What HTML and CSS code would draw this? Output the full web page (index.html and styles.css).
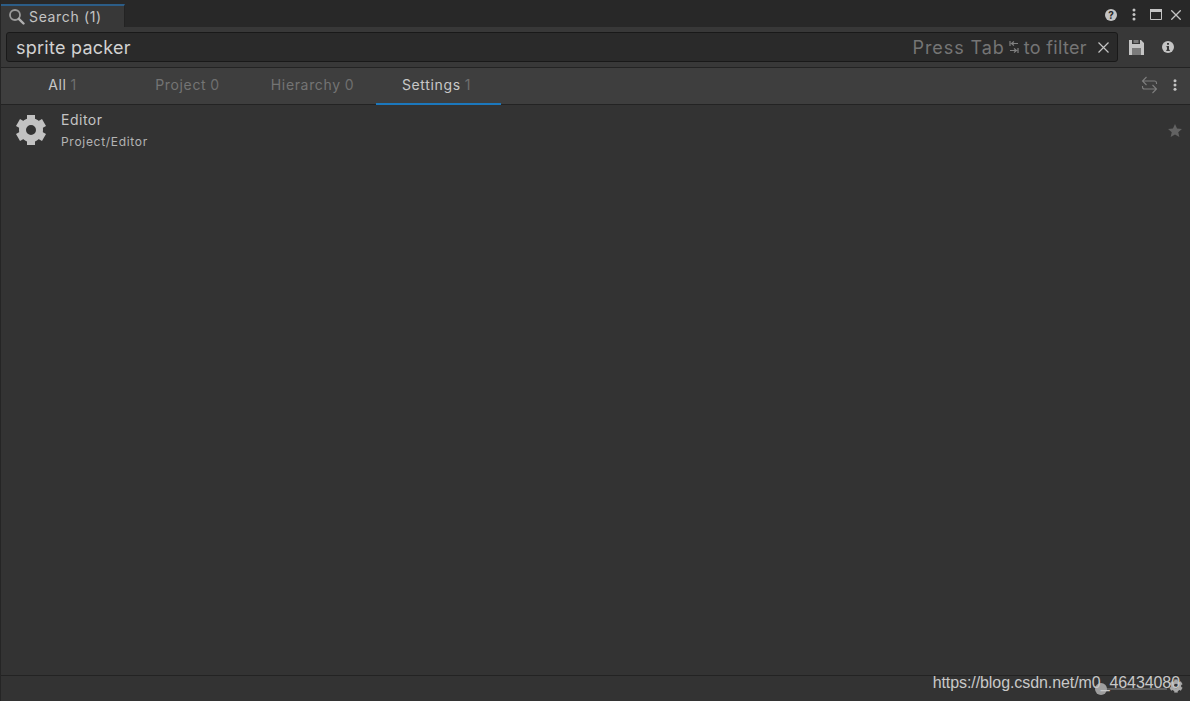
FILE: index.html
```html
<!DOCTYPE html>
<html lang="en">
<head>
<meta charset="utf-8">
<title>Search</title>
<link rel="stylesheet" href="styles.css">
</head>
<body>
<div class="window">
  <header class="titlebar">
    <div class="wintab">
      <svg class="tabicon" width="17" height="17" viewBox="0 0 17 17"><circle cx="7" cy="7" r="5" fill="none" stroke="#9a9a9a" stroke-width="1.8"/><path d="M10.8 10.8 L15.5 15.5" stroke="#b0b0b0" stroke-width="2.4" stroke-linecap="round"/></svg>
      <span>Search (1)</span>
    </div>
    <div class="winbtns">
      <svg width="12" height="12" viewBox="0 0 12 12"><circle cx="6" cy="6" r="6" fill="#c4c4c4"/><text class="qmark" x="6" y="9.500">?</text></svg>
      <svg class="dots" width="4" height="13" viewBox="0 0 4 13"><circle cx="2" cy="2" r="1.500" fill="#c4c4c4"/><circle cx="2" cy="6.500" r="1.500" fill="#c4c4c4"/><circle cx="2" cy="11" r="1.500" fill="#c4c4c4"/></svg>
      <svg class="maxi" width="12" height="11" viewBox="0 0 12 11"><path d="M.5 .5h11v10H.5z" fill="none" stroke="#c4c4c4"/><path d="M0 0h12v3H0z" fill="#c4c4c4"/></svg>
      <svg class="closex" width="10" height="10" viewBox="0 0 10 10"><path d="M.3 .3L9.700 9.700M9.700 .3L.3 9.700" stroke="#c4c4c4" stroke-width="1.300"/></svg>
    </div>
  </header>

  <div class="toolbar">
    <div class="searchbox">
      <span class="query">sprite packer</span>
      <span class="hint"><span class="hintlead">Press Tab</span>
        <svg class="tabglyph" width="10" height="14" viewBox="0 0 10 14"><path d="M1 1v5M9 3.500H2.500M5 1.500l-2.500 2 2.500 2M9 8v5M1 10.500h6.500M5 8.500l2.500 2-2.500 2" fill="none" stroke="#808080" stroke-width="1.200"/></svg>
        <span class="hinttail">to filter</span></span>
      <svg class="clear" width="11" height="11" viewBox="0 0 11 11"><path d="M.5 .5L10.500 10.500M10.500 .5L.5 10.500" stroke="#c4c4c4" stroke-width="1.200"/></svg>
    </div>
    <svg class="save" width="15" height="15" viewBox="0 0 15 15"><path fill-rule="evenodd" d="M0 0h12l3 3v12H0zM3 0h8v4H3zM3 8h9v7H3z" fill="#c4c4c4"/><path d="M4.500 0h5v3h-5zM3 8h9v7H3z" fill="#7a7a7a"/></svg>
    <svg class="info" width="12" height="12" viewBox="0 0 12 12"><circle cx="6" cy="6" r="6" fill="#c4c4c4"/><path d="M5 2h2v1.800H5zM4.500 5h2.500v3.800h.8V10H4.300V8.800H5V6.200h-.5z" fill="#383838"/></svg>
  </div>

  <nav class="tabs">
    <div class="tab"><span class="on">All</span> <span class="count">1</span></div>
    <div class="tab"><span class="off">Project</span> <span class="count">0</span></div>
    <div class="tab"><span class="off">Hierarchy</span> <span class="count">0</span></div>
    <div class="tab selected"><span class="on">Settings</span> <span class="count">1</span></div>
    <div class="tabtools">
      <svg width="17" height="18" viewBox="0 0 17 18"><path d="M5.500 1L1.500 5l4 4M1.500 5H13.500Q15.500 5 15.500 7V8M11.500 9l4 4-4 4M15.500 13H3.500Q1.500 13 1.500 11V10" fill="none" stroke="#7e7e7e" stroke-width="1.100"/></svg>
      <svg width="4" height="12" viewBox="0 0 4 12"><circle cx="2" cy="1.700" r="1.500" fill="#c4c4c4"/><circle cx="2" cy="6" r="1.500" fill="#c4c4c4"/><circle cx="2" cy="10.300" r="1.500" fill="#c4c4c4"/></svg>
    </div>
  </nav>

  <main class="results">
    <div class="row">
      <svg class="gear" width="32" height="32" viewBox="0 0 32 32"><g fill="#c2c2c2"><rect x="12" y="1" width="8" height="7"/><rect x="12" y="1" width="8" height="7" transform="rotate(60 16 16)"/><rect x="12" y="1" width="8" height="7" transform="rotate(120 16 16)"/><rect x="12" y="1" width="8" height="7" transform="rotate(180 16 16)"/><rect x="12" y="1" width="8" height="7" transform="rotate(240 16 16)"/><rect x="12" y="1" width="8" height="7" transform="rotate(300 16 16)"/></g><circle cx="16" cy="16" r="8.500" fill="none" stroke="#c2c2c2" stroke-width="7"/></svg>
      <div class="rowtext">
        <div class="rowtitle">Editor</div>
        <div class="rowpath">Project/Editor</div>
      </div>
      <svg class="star" width="14" height="13" viewBox="0 0 15 14"><path d="M7.500 0l2.200 4.800 5.300.5-4 3.500 1.200 5.200-4.700-2.700-4.700 2.700 1.200-5.200-4-3.500 5.300-.5z" fill="#626262"/></svg>
    </div>
  </main>

  <footer class="statusbar">
    <div class="slider"><span class="knob"></span></div>
    <svg width="14" height="14" viewBox="0 0 32 32"><g fill="#a8a8a8"><rect x="12" y="1" width="8" height="7"/><rect x="12" y="1" width="8" height="7" transform="rotate(60 16 16)"/><rect x="12" y="1" width="8" height="7" transform="rotate(120 16 16)"/><rect x="12" y="1" width="8" height="7" transform="rotate(180 16 16)"/><rect x="12" y="1" width="8" height="7" transform="rotate(240 16 16)"/><rect x="12" y="1" width="8" height="7" transform="rotate(300 16 16)"/></g><circle cx="16" cy="16" r="8.500" fill="none" stroke="#a8a8a8" stroke-width="7"/></svg>
  </footer>
  <div class="watermark">https://blog.csdn.net/m0_46434080</div>
</div>
</body>
</html>
```
FILE: styles.css
```css
* { box-sizing: border-box; }
html, body { margin: 0; height: 100%; overflow: hidden; }
body { background: #333; font-family: Inter, "Liberation Sans", sans-serif; }
.window { position: relative; width: 1190px; height: 701px; display: flex; flex-direction: column; border-left: 1px solid #252525; }

.titlebar { height: 27px; flex: none; background: #282828; display: flex; justify-content: space-between; padding-top: 4px; }
.wintab { width: 124px; background: #383838; border-top: 2px solid #2c5d87; border-right: 1px solid #232323; display: flex; align-items: center; gap: 4px; padding-left: 7px; color: #c4c4c4; font-size: 14px; letter-spacing: .65px; }
.tabicon { flex: none; }
.winbtns { display: flex; align-items: center; padding-right: 9px; height: 21px; }
.dots { margin-left: 15px; }
.maxi { margin-left: 14px; }
.closex { margin-left: 9px; }
.qmark { font: bold 10px Inter, sans-serif; fill: #282828; text-anchor: middle; }

.toolbar { height: 40px; flex: none; background: #383838; display: flex; align-items: center; padding: 0 16px 0 5px; }
.searchbox { flex: none; width: 1112px; height: 30px; background: #2a2a2a; border: 1px solid #191919; border-radius: 3px; display: flex; align-items: center; padding: 0 8px 0 9px; }
.query { color: #d2d2d2; font-size: 18px; letter-spacing: .25px; }
.hint { margin-left: auto; color: #757575; font-size: 18px; display: flex; align-items: center; gap: 5px; }
.hintlead { letter-spacing: .9px; }
.hinttail { letter-spacing: .35px; }
.tabglyph { flex: none; margin-left: -1px; }
.clear { flex: none; margin-left: 11px; }
.save { flex: none; margin-left: 11px; }
.info { flex: none; margin-left: 18px; }

.tabs { height: 38px; flex: none; background: #3e3e3e; border-top: 1px solid #232323; border-bottom: 1px solid #232323; display: flex; font-size: 14px; letter-spacing: .65px; color: #6f6f6f; }
.tab { width: 125px; height: 37px; display: flex; align-items: center; justify-content: center; gap: 4px; padding: 0 2px 3px 0; border-bottom: 2px solid transparent; }
.selected { border-bottom-color: #1b78bd; padding-right: 4px; }
.on { color: #c8c8c8; }
.off { color: #747474; }
.count { color: #6f6f6f; }
.tabtools { margin-left: auto; display: flex; align-items: center; gap: 15px; padding-right: 13px; padding-bottom: 2px; }

.results { flex: 1; background: #333; }
.row { height: 50px; display: flex; align-items: center; padding: 0 8px 0 14px; }
.gear { flex: none; }
.rowtext { flex: 1; margin-left: 14px; }
.rowtitle { color: #c4c4c4; font-size: 14px; line-height: 20px; letter-spacing: .5px; }
.rowpath { color: #b4b4b4; font-size: 12px; line-height: 16px; margin-top: 4px; letter-spacing: .7px; }
.star { flex: none; }

.statusbar { height: 26px; flex: none; background: #333; border-top: 1px solid #232323; display: flex; align-items: center; justify-content: flex-end; padding: 0 7px 5px 0; gap: 2px; }
.slider { position: relative; width: 66px; height: 2px; background: #5c5c5c; margin-top: 5px; }
.knob { position: absolute; left: -6px; top: -5px; width: 12px; height: 12px; border-radius: 50%; background: #9e9e9e; }
.watermark { position: absolute; right: 10px; bottom: 9px; font-family: "Liberation Sans", Arial, sans-serif; font-size: 16px; letter-spacing: -.08px; color: #c8c8c8; white-space: nowrap; }
```
